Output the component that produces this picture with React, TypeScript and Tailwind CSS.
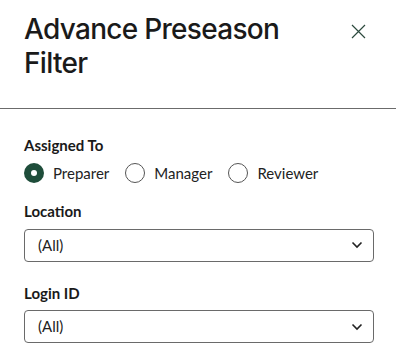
import React from "react";

function Radio({ checked, label }: { checked?: boolean; label: string }) {
  return (
    <label className="flex items-center gap-[9px]">
      {checked ? (
        <span className="flex h-[20px] w-[20px] items-center justify-center rounded-full bg-[#1e4d3a]">
          <span className="h-[6px] w-[6px] rounded-full bg-white" />
        </span>
      ) : (
        <span className="h-[20px] w-[20px] rounded-full border border-[#555]" />
      )}
      <span className="text-[15px] text-[#222]">{label}</span>
    </label>
  );
}

function Select({ value }: { value: string }) {
  return (
    <div className="flex h-[33px] w-[350px] items-center justify-between rounded-[4px] border border-[#6a6a6a] pl-[13px] pr-[10px]">
      <span className="text-[15px] text-[#222]">{value}</span>
      <svg width="12" height="8" viewBox="0 0 12 8" fill="none">
        <path d="M1.5 1.5 L6 6 L10.5 1.5" stroke="#222" strokeWidth="1.6" />
      </svg>
    </div>
  );
}

export default function App() {
  return (
    <div
      className="h-[362px] w-[396px] bg-white"
      style={{ fontFamily: '"Lato", "Liberation Sans", sans-serif' }}
    >
      <div className="flex items-start justify-between pl-[24px] pr-[30px] pt-[12px] h-[108px]">
        <h1
          className="text-[28px] leading-[34px] tracking-[-0.7px] text-[#1a1a1a] font-medium"
          style={{ fontFamily: '"Inter", "Liberation Sans", sans-serif' }}
        >
          Advance Preseason
          <br />
          Filter
        </h1>
        <svg width="15" height="15" viewBox="0 0 15 15" className="mt-[12px]" fill="none">
          <path d="M1 1 L14 14 M14 1 L1 14" stroke="#2d4a3e" strokeWidth="1.2" />
        </svg>
      </div>
      <div className="h-px w-full bg-[#6b6b6b]" />
      <div className="px-[24px] pt-[25px]">
        <div className="text-[15px] font-bold text-[#1a1a1a]">Assigned To</div>
        <div className="mt-[5px] flex items-center gap-[16px]">
          <Radio checked label="Preparer" />
          <Radio label="Manager" />
          <Radio label="Reviewer" />
        </div>
        <div className="mt-[16px] text-[15px] font-bold text-[#1a1a1a]">Location</div>
        <div className="mt-[6px]">
          <Select value="(All)" />
        </div>
        <div className="mt-[20px] text-[15px] font-bold text-[#1a1a1a]">Login ID</div>
        <div className="mt-[6px]">
          <Select value="(All)" />
        </div>
      </div>
    </div>
  );
}
